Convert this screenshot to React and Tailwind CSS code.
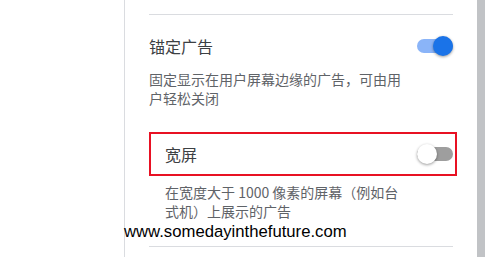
export default function App() {
  return (
    <div
      className="relative flex w-[485px] h-[257px] overflow-hidden bg-white"
      style={{ fontFamily: "'Noto Sans CJK SC', 'Noto Sans', sans-serif" }}
    >
      <div className="w-[124px] shrink-0" />
      <div className="w-px shrink-0 bg-[#dadce0]" />

      {/* settings column */}
      <div className="w-[304px] shrink-0 ml-[24px] flex flex-col">
        <div className="mt-[14px] h-px bg-[#dadce0]" />

        <div className="mt-[19px] h-[24px] flex items-center justify-between">
          <span className="text-[16px] leading-[24px] text-[#3c4043]">锚定广告</span>
          <div className="relative w-[36px] h-[14px] rounded-full bg-[#8ab4f8]">
            <div className="absolute right-0 top-[-3px] w-[20px] h-[20px] rounded-full bg-[#1a73e8] shadow-[0_1px_3px_rgba(0,0,0,0.4)]" />
          </div>
        </div>
        <p className="mt-[12px] w-[262px] text-[14px] leading-[19px] text-[#5f6368]">
          固定显示在用户屏幕边缘的广告，可由用户轻松关闭
        </p>

        <div className="mt-[24px] mr-[-4px] h-[44px] border-2 border-[#e81123] pl-[14px] pr-[2px] flex items-center justify-between">
          <span className="text-[16px] leading-[24px] text-[#3c4043]">宽屏</span>
          <div className="relative w-[36px] h-[14px] rounded-full bg-[#9e9e9e]">
            <div className="absolute left-0 top-[-3px] w-[20px] h-[20px] rounded-full bg-white shadow-[0_1px_3px_rgba(0,0,0,0.4)]" />
          </div>
        </div>
        <p className="mt-[7px] ml-[16px] w-[246px] text-[14px] leading-[19px] text-[#5f6368]">
          在宽度大于 1000 像素的屏幕（例如台式机）上展示的广告
        </p>

        <div className="mt-[25px] h-px bg-[#dadce0]" />
      </div>

      <div className="flex-1" />
      <div className="w-[8px] shrink-0 bg-[#c1c3c6]" />

      {/* watermark */}
      <div
        className="absolute left-[124px] top-[222px] text-[16.7px] leading-[20px] text-black"
        style={{ fontFamily: "'Liberation Sans', Arial, sans-serif" }}
      >
        www.somedayinthefuture.com
      </div>
    </div>
  );
}
